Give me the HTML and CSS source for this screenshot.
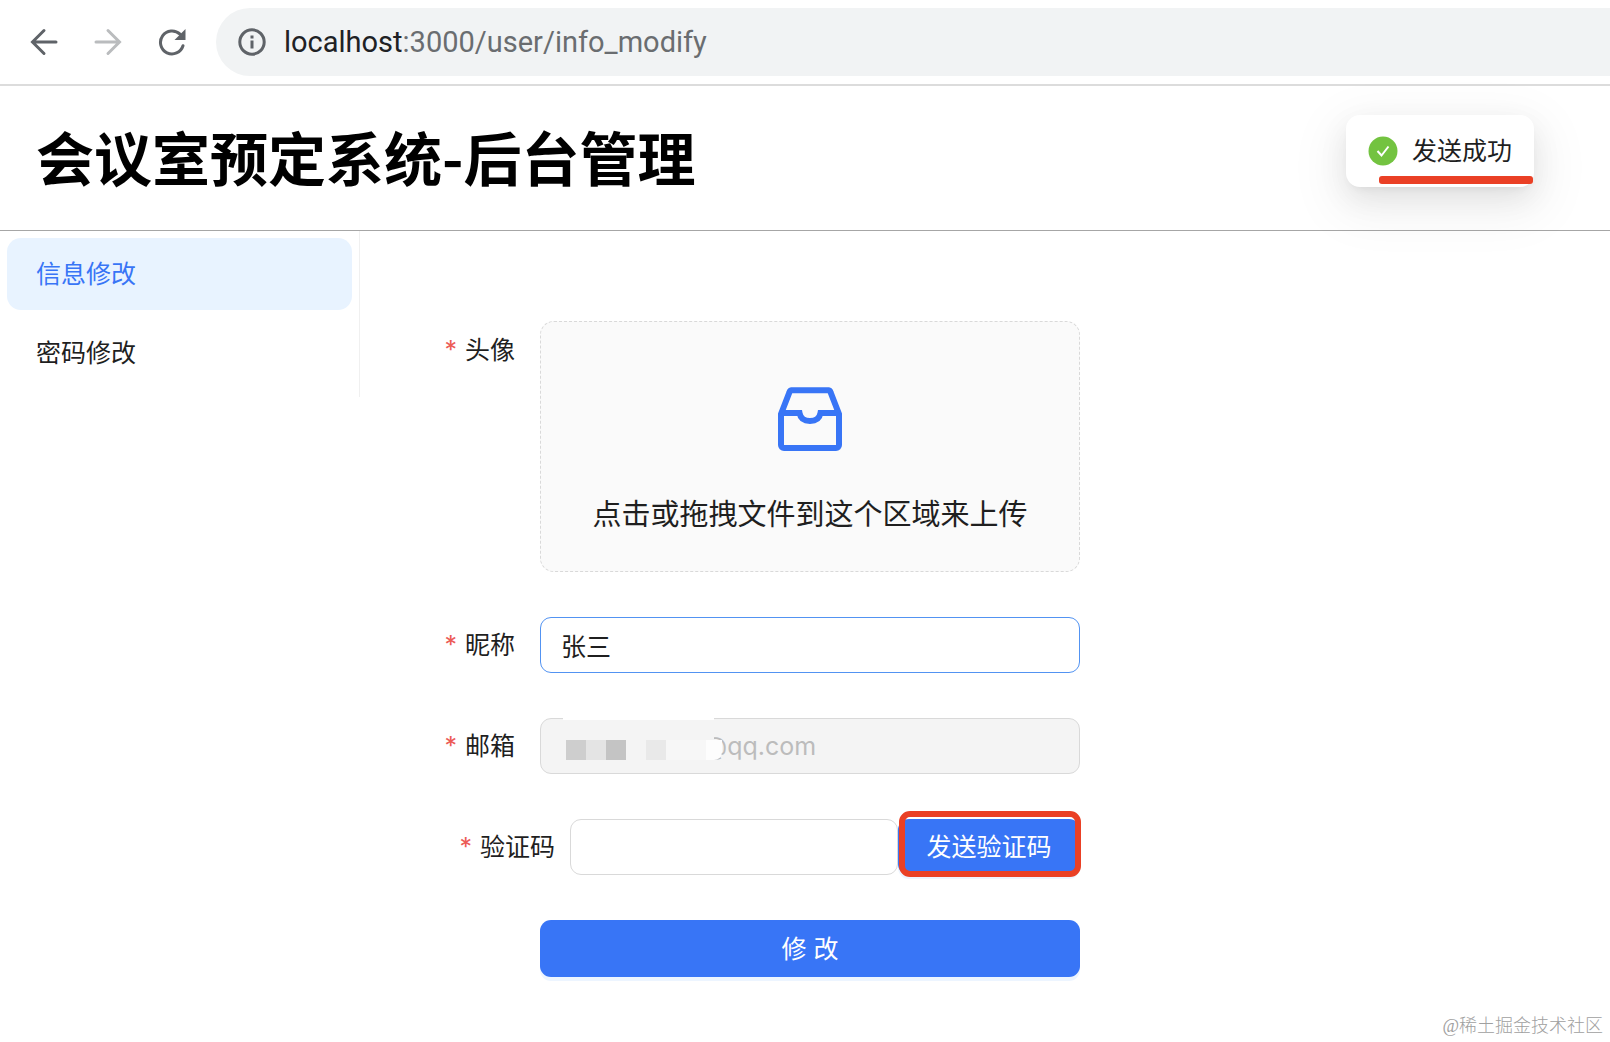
FILE: index.html
```html
<!DOCTYPE html>
<html lang="zh-CN">
<head>
  <meta charset="UTF-8">
  <meta name="viewport" content="width=device-width, initial-scale=1.0">
  <title>会议室预定系统-后台管理</title>
  <link rel="stylesheet" href="styles.css">
</head>
<body>
  <div class="toolbar">
    <button class="nav-btn" type="button" aria-label="后退">
      <svg viewBox="0 0 28 28" width="28" height="28"><path d="M26 14H3M14 2.500L2.500 14L14 25.500"/></svg>
    </button>
    <button class="nav-btn disabled" type="button" aria-label="前进" disabled>
      <svg viewBox="0 0 28 28" width="28" height="28"><path d="M2 14h23M14 2.500L25.500 14L14 25.500"/></svg>
    </button>
    <button class="nav-btn" type="button" aria-label="刷新">
      <svg viewBox="0 0 28 28" width="28" height="28">
        <path d="M25 17.800A11.500 11.500 0 1 1 22 6.200"/>
        <path class="fill" d="M27.500 1V12H16.500z"/>
      </svg>
    </button>
    <div class="omnibox">
      <svg class="info" viewBox="0 0 28 28" width="28" height="28">
        <circle cx="14" cy="14" r="12.200"/>
        <path d="M14 12.500v8M14 7.500v3"/>
      </svg>
      <span class="url"><b>localhost</b>:3000/user/info_modify</span>
    </div>
  </div>

  <header class="header">
    <h1>会议室预定系统-后台管理</h1>
  </header>

  <div class="container">
    <nav class="menu">
      <a class="menu-item active" href="#">信息修改</a>
      <a class="menu-item" href="#">密码修改</a>
    </nav>

    <main class="content">
      <form class="form">
        <div class="form-item top">
          <label class="required" for="avatar">头像</label>
          <label class="dragger">
            <input class="file" type="file" id="avatar">
            <svg viewBox="0 0 64 64" width="64" height="64">
              <path d="M3 27V58a3 3 0 0 0 3 3H58a3 3 0 0 0 3-3V27L52.500 5a2.500 2.500 0 0 0-2-1.800H13.500a2.500 2.500 0 0 0-2 1.800z"/>
              <path d="M3 26H21.500C22.500 31.500 26.500 34 32 34S41.500 31.500 42.500 26H61"/>
            </svg>
            <span>点击或拖拽文件到这个区域来上传</span>
          </label>
        </div>

        <div class="form-item">
          <label class="required" for="nickName">昵称</label>
          <input class="input focused" type="text" id="nickName" value="张三">
        </div>

        <div class="form-item">
          <label class="required" for="email">邮箱</label>
          <div class="email">
            <input class="input" type="text" id="email" value="@qq.com" disabled>
            <div class="mask">
              <i class="m1"></i><i class="m2"></i><i class="m3"></i><i></i><i class="m4"></i><i class="m5"></i><i class="m5"></i><i class="m6"></i>
            </div>
          </div>
        </div>

        <div class="form-item captcha">
          <label class="required" for="captcha">验证码</label>
          <input class="input" type="text" id="captcha">
          <button class="btn send" type="button">发送验证码</button>
        </div>

        <div class="form-item submit">
          <button class="btn" type="submit">修 改</button>
        </div>
      </form>
    </main>
  </div>

  <div class="message" role="status">
    <svg viewBox="0 0 30 30" width="30" height="30">
      <circle cx="15" cy="15" r="14.500"/>
      <path d="M9.500 15L13.500 19.500L20.500 10.500"/>
    </svg>
    <span>发送成功</span>
  </div>

  <div class="watermark">@稀土掘金技术社区</div>
</body>
</html>
```
FILE: styles.css
```css
* {
  box-sizing: border-box;
}

body {
  margin: 0;
  min-height: 100vh;
  background: #fff;
  color: #1f1f1f;
  font-family: Inter, "Noto Sans CJK SC", sans-serif;
  font-size: 25px;
  line-height: 40px;
}

button,
input {
  font: inherit;
}

a {
  text-decoration: none;
  color: inherit;
}

/* browser bar */
.toolbar {
  display: flex;
  align-items: center;
  gap: 36px;
  height: 86px;
  padding-left: 30px;
  border-bottom: 2px solid #dcdcdc;
}

.nav-btn {
  display: flex;
  padding: 0;
  border: none;
  background: none;
}

.nav-btn svg {
  fill: none;
  stroke: #5f6368;
  stroke-width: 3;
  stroke-linecap: round;
}

.nav-btn.disabled svg {
  stroke: #babcbe;
}

.nav-btn .fill {
  fill: #5f6368;
  stroke: none;
}

.omnibox {
  flex: 1;
  display: flex;
  align-items: center;
  gap: 18px;
  height: 68px;
  margin-left: -6px;
  padding-left: 22px;
  border-radius: 34px 0 0 34px;
  background: #f1f3f4;
}

.info {
  fill: none;
  stroke: #5f6368;
  stroke-width: 3;
}

.url {
  font-family: Roboto, sans-serif;
  font-size: 29px;
  color: #6a6d70;
}

.url b {
  font-weight: 400;
  color: #202124;
}

/* page header */
.header {
  height: 145px;
  padding: 0 36px;
  border-bottom: 1px solid #a6a6a6;
}

.header h1 {
  margin: 0;
  color: #000;
  font-family: "Noto Sans CJK SC", sans-serif;
  font-size: 58px;
  font-weight: 700;
  line-height: 140px;
}

.container {
  display: flex;
  align-items: flex-start;
}

.menu {
  display: flex;
  flex-direction: column;
  gap: 7px;
  width: 360px;
  padding: 7px 7px 8px;
  border-right: 1px solid #f0f0f0;
}

.menu-item {
  padding: 0 29px;
  border-radius: 14px;
  line-height: 72px;
}

.menu-item.active {
  background: #e8f3ff;
  color: #3875f6;
}

.content {
  flex: 1;
  padding-top: 90px;
}

/* form */
.form {
  display: flex;
  flex-direction: column;
  gap: 45px;
  max-width: 720px;
}

.form-item {
  display: flex;
  align-items: center;
}

.form-item.top {
  align-items: flex-start;
}

.required {
  width: 180px;
  padding-right: 25px;
  line-height: 56px;
  text-align: right;
}

.top .required {
  line-height: 58px;
}

.required::before {
  content: "*";
  margin-right: 8px;
  color: #ec5b56;
}

.dragger {
  flex: 1;
  display: flex;
  flex-direction: column;
  align-items: center;
  gap: 44px;
  height: 251px;
  padding-top: 65px;
  border: 1px dashed #d9d9d9;
  border-radius: 14px;
  background: #fafafa;
  font-size: 29px;
}

.dragger svg {
  fill: none;
  stroke: #3875f6;
  stroke-width: 6;
}

.file {
  position: absolute;
  opacity: 0;
  width: 1px;
  height: 1px;
}

.input {
  flex: 1;
  width: 100%;
  min-width: 0;
  height: 56px;
  padding: 0 20px;
  border: 1px solid #d9d9d9;
  border-radius: 11px;
  background: #fff;
  color: #1f1f1f;
}

.input.focused {
  border-color: #5293f2;
}

.email {
  position: relative;
  flex: 1;
  display: flex;
}

.email .input {
  padding-left: 162px;
  background: #f4f4f4;
  color: #bcbcbc;
}

.mask {
  position: absolute;
  top: 0;
  left: 23px;
  display: flex;
  align-items: flex-end;
  height: 42px;
  padding-left: 3px;
}

.mask::before {
  content: "";
  position: absolute;
  top: 0;
  left: 0;
  width: 151px;
  height: 40px;
  border-top: 2px solid #fff;
  background: #f4f4f4;
}

.mask i {
  position: relative;
  width: 20px;
  height: 20px;
  background: #f4f4f4;
}

.mask .m1 { background: #cecece; }
.mask .m2 { background: #e4e4e4; }
.mask .m3 { background: #c4c4c4; }
.mask .m4 { background: #e9e9e9; }
.mask .m5 { background: #f7f7f7; }
.mask .m6 {
  width: 16px;
  border-radius: 0 0 8px 0;
  background: #fdfdfd;
}

.captcha .required {
  width: 210px;
  padding-right: 15px;
}

.btn {
  flex: 1;
  height: 57px;
  padding: 0;
  border: none;
  border-radius: 11px;
  background: #3875f6;
  box-shadow: 0 4px 0 #edf5ff;
  color: #fff;
}

.btn.send {
  position: relative;
  flex: none;
  width: 182px;
  height: 56px;
}

.btn.send::after {
  content: "";
  position: absolute;
  inset: -8px -1px -2px 1px;
  border: 6px solid #ea4025;
  border-radius: 11px;
}

.submit {
  padding-left: 180px;
}

/* toast */
.message {
  position: absolute;
  top: 115px;
  right: 76px;
  display: flex;
  align-items: center;
  gap: 14px;
  height: 72px;
  padding: 0 22px;
  border-radius: 14px;
  background: #fff;
  box-shadow: 0 11px 29px rgba(0, 0, 0, .08), 0 5px 11px -7px rgba(0, 0, 0, .12), 0 16px 50px 14px rgba(0, 0, 0, .05);
}

.message::after {
  content: "";
  position: absolute;
  right: 1px;
  bottom: 3px;
  width: 154px;
  height: 8px;
  border-radius: 3px;
  background: #ea4025;
}

.message circle {
  fill: #73c340;
}

.message path {
  fill: none;
  stroke: #fff;
  stroke-width: 2;
}

.watermark {
  position: absolute;
  right: 7px;
  bottom: 4px;
  color: #a0a0a0;
  font-family: "Liberation Serif", "Noto Sans CJK SC", serif;
  font-size: 18px;
  font-weight: 300;
  line-height: 24px;
}
```
